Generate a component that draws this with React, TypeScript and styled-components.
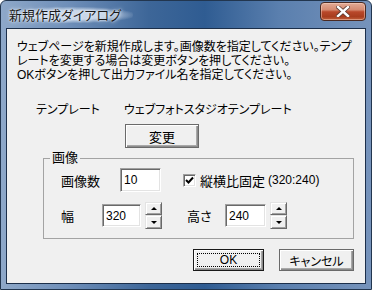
import React from "react";
import styled, { createGlobalStyle } from "styled-components";

const GlobalStyle = createGlobalStyle`
  html, body {
    margin: 0;
    padding: 0;
    background: #ffffff;
  }
  body {
    font-family: "Liberation Sans", "Noto Sans CJK JP", sans-serif;
    font-size: 12px;
    color: #000;
    font-feature-settings: "palt";
  }
  * {
    box-sizing: border-box;
  }
`;

const Window = styled.div`
  width: 372px;
  height: 290px;
  display: flex;
  flex-direction: column;
  padding: 0 5px 5px 5px;
  border: 1px solid #22364f;
  border-radius: 6px 6px 0 0;
  background: linear-gradient(
    90deg,
    #8ea8c9 0%,
    #6f8fb9 18%,
    #3d6698 40%,
    #2f5c92 55%,
    #5a7fae 75%,
    #7693bb 100%
  );
`;

const TitleBar = styled.div`
  height: 27px;
  display: flex;
  align-items: flex-start;
  justify-content: space-between;
`;

const Title = styled.span`
  margin-top: 6px;
  margin-left: 2px;
  padding: 0 12px 0 1px;
  font-family: "Noto Sans CJK JP", sans-serif;
  font-size: 13px;
  line-height: 16px;
  color: #1a1a1a;
  border-radius: 10px;
  background: radial-gradient(
    ellipse at center,
    rgba(215, 226, 240, 0.85) 40%,
    rgba(215, 226, 240, 0) 75%
  );
  text-shadow: 0 0 4px #e8eef7, 0 0 2px #e8eef7;
`;

const CloseButton = styled.div`
  width: 46px;
  height: 19px;
  margin-top: 1px;
  margin-right: 0;
  display: flex;
  align-items: center;
  justify-content: center;
  border: 1px solid #4a2a22;
  border-radius: 4px;
  background: linear-gradient(
    180deg,
    #e2ab96 0%,
    #d58a70 40%,
    #b9482a 52%,
    #a83d1e 80%,
    #c2603c 100%
  );
  box-shadow: inset 0 0 0 1px rgba(255, 220, 205, 0.45);
`;

const Client = styled.div`
  flex: 1;
  display: flex;
  flex-direction: column;
  border: 1px solid #1c2f4a;
  background: #f0f0f0;
`;

const Message = styled.p`
  margin: 11px 0 0 10px;
  line-height: 14px;
  white-space: nowrap;
`;

const TemplateRow = styled.div`
  display: flex;
  margin: 21px 0 0 29px;
  line-height: 14px;
`;

const RowLabel = styled.span<{ w: number }>`
  width: ${(p) => p.w}px;
  flex-shrink: 0;
`;

const PushButton = styled.button<{ w: number; h: number; isDefault?: boolean }>`
  position: relative;
  width: ${(p) => p.w}px;
  height: ${(p) => p.h}px;
  padding: 0;
  font: inherit;
  font-feature-settings: "palt";
  color: #000;
  background: #f0f0f0;
  border: 1px solid ${(p) => (p.isDefault ? "#1a1a1a" : "#6a6a6a")};
  box-shadow: inset 1px 1px 0 #ffffff, inset -1px -1px 0 #8c8c8c,
    inset -2px -2px 0 #a8a8a8;
  display: flex;
  align-items: center;
  justify-content: center;
`;

const FocusRing = styled.span`
  position: absolute;
  inset: 3px;
  border: 1px dotted #000;
`;

const ChangeButton = styled(PushButton)`
  margin: 7px 0 0 118px;
  font-size: 13px;
`;

const GroupBox = styled.fieldset`
  margin: 3px 0 0 36px;
  padding: 0 0 9px 0;
  width: 311px;
  border: 1px solid #a3a3a3;
  border-radius: 0;
  min-inline-size: 0;
`;

const GroupLegend = styled.legend`
  margin-left: 6px;
  padding: 0 2px;
  line-height: 14px;
  font-size: 13px;
`;

const GroupRow = styled.div<{ top: number }>`
  display: flex;
  align-items: center;
  margin-top: ${(p) => p.top}px;
  padding-left: 17px;
`;

const FieldLabel = styled.span<{ w: number; gap?: number }>`
  width: ${(p) => p.w}px;
  margin-left: ${(p) => p.gap ?? 0}px;
  flex-shrink: 0;
  font-size: 13px;
`;

const TextField = styled.div<{ w: number; h: number }>`
  width: ${(p) => p.w}px;
  height: ${(p) => p.h}px;
  padding: 0 3px;
  display: flex;
  align-items: center;
  background: #fff;
  border: 1px solid;
  border-color: #a0a0a0 #ffffff #ffffff #a0a0a0;
  box-shadow: inset 1px 1px 0 #696969, inset -1px -1px 0 #e3e3e3;
  font-size: 12px;
`;

const Spin = styled.div`
  width: 17px;
  height: 27px;
  margin-left: 4px;
  display: flex;
  flex-direction: column;
`;

const SpinHalf = styled.div<{ h: number }>`
  height: ${(p) => p.h}px;
  display: flex;
  align-items: center;
  justify-content: center;
  background: #f0f0f0;
  border: 1px solid;
  border-color: #e3e3e3 #696969 #696969 #e3e3e3;
  box-shadow: inset 1px 1px 0 #fff, inset -1px -1px 0 #a0a0a0;
`;

const Arrow = styled.span<{ up?: boolean }>`
  width: 0;
  height: 0;
  border-left: 3px solid transparent;
  border-right: 3px solid transparent;
  ${(p) =>
    p.up ? "border-bottom: 3px solid #000;" : "border-top: 3px solid #000;"}
`;

const CheckBox = styled.span`
  width: 13px;
  height: 13px;
  margin-left: 22px;
  display: flex;
  align-items: center;
  justify-content: center;
  background: #fff;
  border: 1px solid;
  border-color: #a0a0a0 #fff #fff #a0a0a0;
  box-shadow: inset 1px 1px 0 #696969, inset -1px -1px 0 #e3e3e3;
`;

const CheckLabel = styled.span`
  margin-left: 4px;
  font-size: 13px;
`;

const Ratio = styled.span`
  margin-left: 3px;
  font-size: 12px;
`;

const ButtonRow = styled.div`
  display: flex;
  justify-content: flex-end;
  gap: 15px;
  margin: 10px 11px 0 0;
`;

const SpinBox: React.FC = () => (
  <Spin>
    <SpinHalf h={13}>
      <Arrow up />
    </SpinHalf>
    <SpinHalf h={14}>
      <Arrow />
    </SpinHalf>
  </Spin>
);

export default function App() {
  return (
    <>
      <GlobalStyle />
      <Window>
        <TitleBar>
          <Title>新規作成ダイアログ</Title>
          <CloseButton>
            <svg width="14" height="11" viewBox="0 0 14 11">
              <path
                d="M2 1 L12 10 M12 1 L2 10"
                stroke="#5b3a30"
                strokeWidth="4"
                strokeLinecap="square"
              />
              <path
                d="M2 1 L12 10 M12 1 L2 10"
                stroke="#ffffff"
                strokeWidth="2.4"
                strokeLinecap="square"
              />
            </svg>
          </CloseButton>
        </TitleBar>
        <Client>
          <Message>
            ウェブページを新規作成します。画像数を指定してください。テンプ
            <br />
            レートを変更する場合は変更ボタンを押してください。
            <br />
            OKボタンを押して出力ファイル名を指定してください。
          </Message>
          <TemplateRow>
            <RowLabel w={88}>テンプレート</RowLabel>
            <span>ウェブフォトスタジオテンプレート</span>
          </TemplateRow>
          <ChangeButton w={74} h={24}>
            変更
          </ChangeButton>
          <GroupBox>
            <GroupLegend>画像</GroupLegend>
            <GroupRow top={3}>
              <FieldLabel w={59}>画像数</FieldLabel>
              <TextField w={41} h={24}>
                10
              </TextField>
              <CheckBox>
                <svg width="9" height="9" viewBox="0 0 9 9">
                  <path
                    d="M1 4 L3.5 6.5 L8 1.5"
                    stroke="#000"
                    strokeWidth="2"
                    fill="none"
                  />
                </svg>
              </CheckBox>
              <CheckLabel>縦横比固定</CheckLabel>
              <Ratio>(320:240)</Ratio>
            </GroupRow>
            <GroupRow top={10}>
              <FieldLabel w={41}>幅</FieldLabel>
              <TextField w={39} h={23}>
                320
              </TextField>
              <SpinBox />
              <FieldLabel w={38} gap={25}>
                高さ
              </FieldLabel>
              <TextField w={41} h={23}>
                240
              </TextField>
              <SpinBox />
            </GroupRow>
          </GroupBox>
          <ButtonRow>
            <PushButton w={71} h={22} isDefault>
              <FocusRing />
              OK
            </PushButton>
            <PushButton w={75} h={22}>
              キャンセル
            </PushButton>
          </ButtonRow>
        </Client>
      </Window>
    </>
  );
}
